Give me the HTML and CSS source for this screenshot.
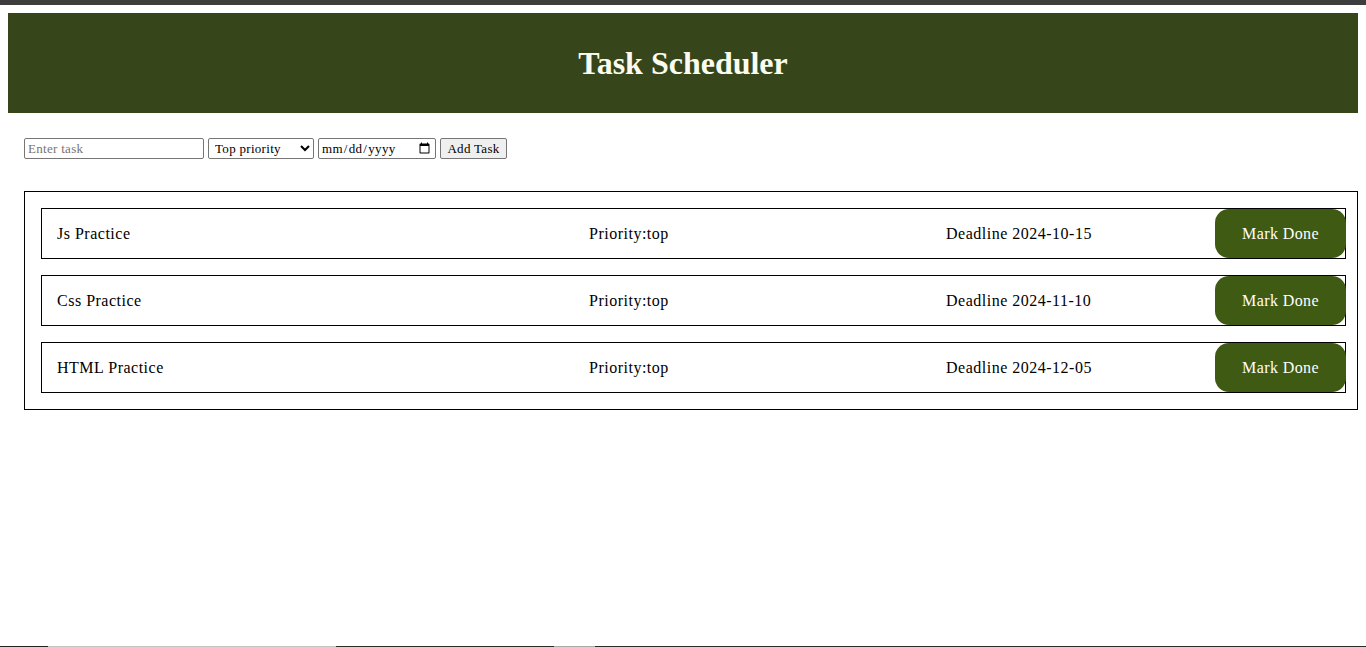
FILE: index.html
```html
<!DOCTYPE html>
<html lang="en">
<head>
<meta charset="UTF-8">
<title>Task Scheduler</title>
<link rel="stylesheet" href="styles.css">
</head>
<body>
<div class="topstrip"></div>
<div class="page">
  <header class="header">
    <h1 class="title">Task Scheduler</h1>
  </header>
  <form class="task-form">
    <input class="task-input" type="text" placeholder="Enter task">
    <select class="priority-select">
      <option>Top priority</option>
      <option>Middle priority</option>
      <option>Low priority</option>
    </select>
    <input class="date-input" type="date">
    <button class="add-btn" type="button">Add Task</button>
  </form>
  <section class="task-list">
    <div class="task">
      <span class="task-name">Js Practice</span>
      <span class="task-priority">Priority:top</span>
      <span class="task-deadline">Deadline 2024-10-15</span>
      <button class="done-btn" type="button">Mark Done</button>
    </div>
    <div class="task">
      <span class="task-name">Css Practice</span>
      <span class="task-priority">Priority:top</span>
      <span class="task-deadline">Deadline 2024-11-10</span>
      <button class="done-btn" type="button">Mark Done</button>
    </div>
    <div class="task">
      <span class="task-name">HTML Practice</span>
      <span class="task-priority">Priority:top</span>
      <span class="task-deadline">Deadline 2024-12-05</span>
      <button class="done-btn" type="button">Mark Done</button>
    </div>
  </section>
</div>
<div class="bottomstrip">
  <span class="seg seg-dark1"></span>
  <span class="seg seg-light1"></span>
  <span class="seg seg-dark2"></span>
  <span class="seg seg-light2"></span>
  <span class="seg seg-dark3"></span>
</div>
</body>
</html>
```

FILE: styles.css
```css
html, body {
  margin: 0;
  padding: 0;
  background: #ffffff;
}

body {
  font-family: "Liberation Serif", "Times New Roman", serif;
  color: #000;
}

.topstrip {
  height: 5px;
  background: #3d3d3d;
}

.page {
  padding: 8px 8px 0 8px;
}

.header {
  height: 100px;
  background: #36461a;
  display: flex;
  align-items: center;
  justify-content: center;
}

.title {
  margin: 0;
  font-size: 32px;
  font-weight: bold;
  color: #fbfbef;
  font-family: "Liberation Serif", "Times New Roman", serif;
}

.task-form {
  display: flex;
  align-items: center;
  gap: 4px;
  margin: 25px 0 0 16px;
  height: 21px;
}

.task-form input,
.task-form select,
.task-form button {
  font-family: "Liberation Serif", "Times New Roman", serif;
  font-size: 13px;
  letter-spacing: 0.3px;
  height: 21px;
  box-sizing: border-box;
  margin: 0;
}

.task-input {
  width: 180px;
  border: 1px solid #767676;
  border-radius: 2px;
  padding: 1px 3px;
}

.task-input::placeholder {
  color: #757575;
}

.priority-select {
  width: 106px;
  border: 1px solid #767676;
  border-radius: 2px;
  background: #fff;
  color: #000;
  padding: 0 0 0 2px;
}

.date-input {
  width: 118px;
  border: 1px solid #767676;
  border-radius: 2px;
  padding: 0 2px;
}

.add-btn {
  width: 67px;
  border: 1px solid #767676;
  border-radius: 2px;
  background: #efefef;
  color: #000;
  padding: 0 4px;
}

.task-list {
  margin: 32px 0 0 16px;
  border: 1px solid #000;
  padding: 16px 11px 16px 16px;
  display: flex;
  flex-direction: column;
  gap: 16px;
}

.task {
  border: 1px solid #000;
  display: grid;
  grid-template-columns: 532px 357px 269px 131px;
  align-items: center;
  padding-left: 15px;
  height: 51px;
  box-sizing: border-box;
  font-size: 16px;
  letter-spacing: 0.5px;
}

.task-name,
.task-priority,
.task-deadline {
  white-space: nowrap;
}

.done-btn {
  height: 49px;
  width: 131px;
  border: none;
  border-radius: 14px;
  background: #3f5a12;
  color: #ffffff;
  font-family: "Liberation Serif", "Times New Roman", serif;
  font-size: 16px;
  letter-spacing: 0.4px;
  justify-self: end;
  padding: 0;
}

.bottomstrip {
  position: fixed;
  left: 0;
  right: 0;
  bottom: 0;
  height: 1px;
  display: flex;
}

.seg {
  display: block;
  height: 1px;
}

.seg-dark1 { width: 48px; background: #222; }
.seg-light1 { width: 288px; background: #c4c4c4; }
.seg-dark2 { width: 218px; background: #2e2b27; }
.seg-light2 { width: 41px; background: #a9a9a9; }
.seg-dark3 { flex: 1; background: #2b2b2b; }
```
